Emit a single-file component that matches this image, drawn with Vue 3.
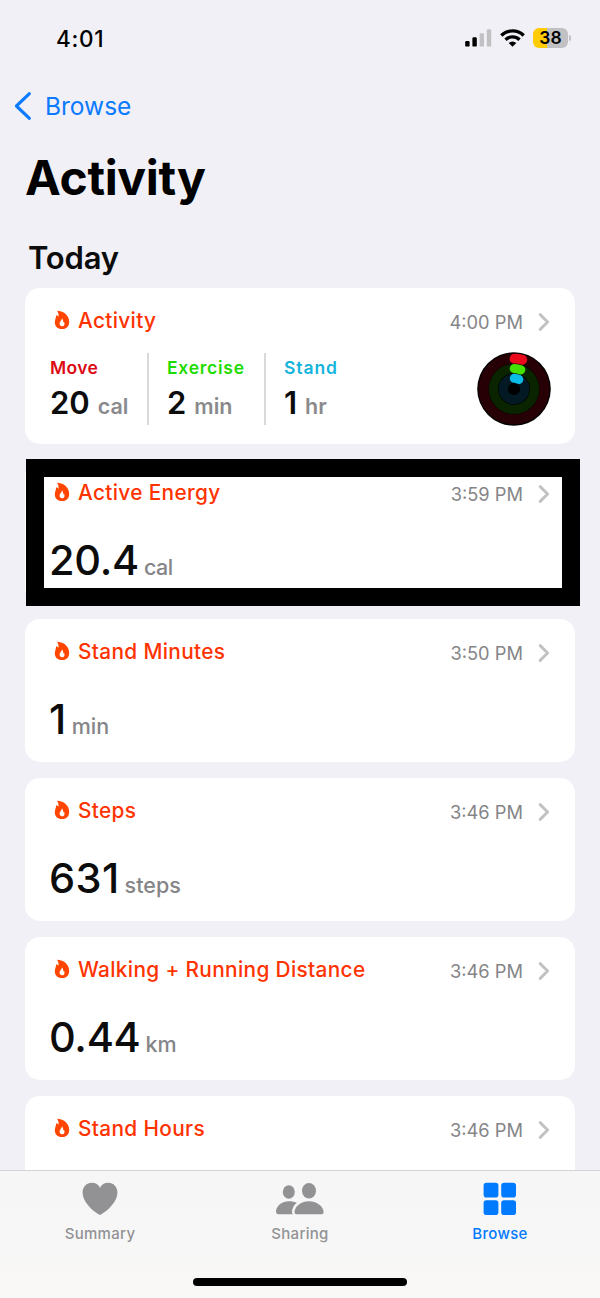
<script setup>
import { ref } from "vue"

const activeTab = ref("browse")

const summary = [
    { key: "move", label: "Move", value: "20", unit: "cal" },
    { key: "exercise", label: "Exercise", value: "2", unit: "min" },
    { key: "stand", label: "Stand", value: "1", unit: "hr" },
]

const cards = [
    { key: "activity", title: "Activity", time: "4:00 PM", rings: true },
    { key: "energy", title: "Active Energy", time: "3:59 PM", value: "20.4", unit: "cal", highlighted: true },
    { key: "minutes", title: "Stand Minutes", time: "3:50 PM", value: "1", unit: "min" },
    { key: "steps", title: "Steps", time: "3:46 PM", value: "631", unit: "steps" },
    { key: "distance", title: "Walking + Running Distance", time: "3:46 PM", value: "0.44", unit: "km" },
    { key: "hours", title: "Stand Hours", time: "3:46 PM", value: "", unit: "" },
]

const tabs = [
    { key: "summary", label: "Summary" },
    { key: "sharing", label: "Sharing" },
    { key: "browse", label: "Browse" },
]
</script>

<template>
    <div class="screen">

        <!-- STATUS BAR -->
        <header class="status-bar">
            <span class="clock">4:01</span>
            <div class="status-icons">
                <svg class="signal" width="27" height="18" viewBox="0 0 27 18">
                    <rect x="0.2" y="12" width="4.4" height="5.6" rx="1.2" fill="#000" />
                    <rect x="7.4" y="8.2" width="4.4" height="9.4" rx="1.2" fill="#000" />
                    <rect x="14.6" y="4.2" width="4.4" height="13.4" rx="1.2" fill="#c1c1c4" />
                    <rect x="21.8" y="0.2" width="4.4" height="17.4" rx="1.2" fill="#c1c1c4" />
                </svg>
                <svg class="wifi" width="25" height="18" viewBox="0 0 25 18">
                    <g fill="none" stroke="#000" stroke-width="3.3">
                        <path d="M1.3 6.5A16 16 0 0 1 23.7 6.5" />
                        <path d="M5.5 10.8A10 10 0 0 1 19.5 10.8" />
                    </g>
                    <path d="M12.5 17.8L8.7 14A5.5 5.5 0 0 1 16.3 14Z" fill="#000" />
                </svg>
                <div class="battery">38</div>
                <span class="battery-cap"></span>
            </div>
        </header>

        <nav class="back">
            <svg width="18" height="30" viewBox="0 0 18 30">
                <path d="M15.4 2.7L2.4 15L15.4 27.3" fill="none" stroke="#0a7aff" stroke-width="3.1" stroke-linecap="round" stroke-linejoin="round" />
            </svg>
            <span>Browse</span>
        </nav>

        <h1>Activity</h1>
        <h2>Today</h2>

        <!-- CARDS -->
        <main class="cards">
            <section v-for="card in cards" :key="card.key" class="card" :class="{ tall: card.rings }">
                <div class="card-head">
                    <svg class="flame" width="16" height="20" viewBox="0 0 16 20">
                        <path fill="#ff4500" fill-rule="evenodd" d="M2.9 .8C8.2 .7 15.2 4.6 15.2 11.9C15.2 16.4 12.2 19.1 8 19.1C3.6 19.1 .8 16.4 .8 12.6C.8 9.6 2.2 7.9 2.2 5.2C3.2 5.4 4 6 4.4 6.9C4.8 4.6 4.4 2.4 2.9 .8ZM7.9 8.2C8.2 10 5.6 11.2 5.6 13.8C5.6 15.4 6.6 16.3 8 16.3C9.5 16.3 10.5 15.4 10.5 13.9C10.5 12.9 10.2 12.1 9.8 11.6C9.7 12.2 9.5 12.5 9.1 12.7C9.4 11.1 9 9.2 7.9 8.2Z" />
                    </svg>
                    <span class="card-title" :class="card.key">{{ card.title }}</span>
                    <span class="card-time">{{ card.time }}</span>
                    <svg class="chevron" width="12" height="20" viewBox="0 0 12 20">
                        <path d="M2.2 2.6L9.6 10L2.2 17.4" fill="none" stroke="#c2c2c4" stroke-width="2.9" stroke-linecap="round" stroke-linejoin="round" />
                    </svg>
                </div>

                <div v-if="card.rings" class="summary">
                    <div v-for="item in summary" :key="item.key" class="stat">
                        <div class="stat-label" :class="item.key">{{ item.label }}</div>
                        <div class="stat-value">
                            <b>{{ item.value }}</b>
                            <span>{{ item.unit }}</span>
                        </div>
                    </div>
                    <svg class="rings" width="74" height="74" viewBox="-37 -37 74 74">
                        <circle r="36.8" fill="#000" />
                        <g fill="none">
                            <circle r="30.5" stroke="#270006" stroke-width="10" />
                            <circle r="20.5" stroke="#0a2400" stroke-width="9.2" />
                            <circle r="10.7" stroke="#031a24" stroke-width="9.2" />
                            <g stroke-linecap="round">
                                <path d="M.5 -30.3A30.3 30.3 0 0 1 8.3 -29.2" stroke="#ea0a1c" stroke-width="9.8" />
                                <path d="M.3 -20.4A20.4 20.4 0 0 1 6.8 -19.2" stroke="#45e000" stroke-width="9.2" />
                                <path d="M.3 -10.7A10.7 10.7 0 0 1 4.8 -9.6" stroke="#08bce6" stroke-width="9" />
                            </g>
                        </g>
                    </svg>
                </div>

                <div v-else-if="card.value" class="reading" :class="card.key">
                    <span class="value">{{ card.value }}</span>
                    <span class="unit">{{ card.unit }}</span>
                </div>

                <div v-if="card.highlighted" class="highlight"></div>
            </section>
        </main>

        <!-- TAB BAR -->
        <footer class="tab-bar">
            <div class="tabs">
                <button v-for="tab in tabs" :key="tab.key" class="tab" :class="{ active: activeTab === tab.key }" @click="activeTab = tab.key">
                    <svg v-if="tab.key === 'summary'" width="36" height="34" viewBox="0 0 36 34">
                        <path fill="currentColor" d="M18 33C16.6 33 .6 22.5 .6 10.6C.6 4.8 4.6 .8 9.8 .8C13.5 .8 16.4 2.7 18 5.7C19.6 2.7 22.5 .8 26.2 .8C31.4 .8 35.4 4.8 35.4 10.6C35.4 22.5 19.4 33 18 33Z" />
                    </svg>
                    <svg v-else-if="tab.key === 'sharing'" width="48" height="34" viewBox="0 0 48 34">
                        <g fill="currentColor">
                            <ellipse cx="12.8" cy="10" rx="6" ry="6.7" />
                            <ellipse cx="33" cy="8.7" rx="7" ry="7.7" />
                            <path d="M20.9 20.8C17.5 23.4 15.9 27 16 30.3Q16 31.5 17 32.2H2.2Q0 32.2 0 29.8C0 24.5 5 19.2 12.8 19.2C16 19.2 18.8 19.9 20.9 20.8Z" />
                            <path d="M21 32.2C19.4 32.2 18.5 31.4 18.5 29.9C18.5 25.4 24 19.2 33 19.2C42 19.2 47.6 25.4 47.6 29.9C47.6 31.4 46.7 32.2 45.1 32.2Z" />
                        </g>
                    </svg>
                    <svg v-else width="34" height="34" viewBox="0 0 34 34">
                        <g fill="currentColor">
                            <rect x=".6" y=".7" width="14.8" height="14.8" rx="2.8" />
                            <rect x="18.2" y=".7" width="14.8" height="14.8" rx="2.8" />
                            <rect x=".6" y="18.2" width="14.8" height="14.8" rx="2.8" />
                            <rect x="18.2" y="18.2" width="14.8" height="14.8" rx="2.8" />
                        </g>
                    </svg>
                    <span>{{ tab.label }}</span>
                </button>
            </div>
            <div class="home-indicator"></div>
        </footer>

    </div>
</template>

<style>
body {
    margin: 0;
    background: #f1f0f6;
}
</style>

<style scoped>
.screen {
    display: flex;
    flex-direction: column;
    width: 600px;
    height: 1298px;
    overflow: hidden;
    background: #f1f0f6;
    color: #0c0c0d;
    font-family: Inter, "Liberation Sans", sans-serif;
}

/* STATUS BAR */
.status-bar {
    flex: none;
    display: flex;
    align-items: center;
    justify-content: space-between;
    height: 76px;
    padding: 0 30px 0 56px;
    color: #000;
}

.clock {
    font-size: 22.5px;
    font-weight: 500;
    letter-spacing: 0.7px;
}

.status-icons {
    display: flex;
    align-items: center;
}

.wifi {
    margin: 0 8px 0 8px;
}

.battery {
    width: 35px;
    height: 20px;
    border-radius: 6px;
    background: linear-gradient(90deg, #ffcc02 14px, #c1c1c4 14px);
    font-size: 17.5px;
    font-weight: 600;
    line-height: 20px;
    text-align: center;
}

.battery-cap {
    width: 2px;
    height: 6px;
    margin-left: 1px;
    margin-right: -1px;
    border-radius: 0 3px 3px 0;
    background: #c1c1c4;
}

/* HEADINGS */
.back {
    flex: none;
    display: flex;
    align-items: center;
    gap: 13px;
    height: 60px;
    padding-left: 14px;
    color: #0a7aff;
    font-size: 24.5px;
    letter-spacing: 0;
}

h1 {
    flex: none;
    margin: 0;
    padding: 12px 0 0 25px;
    color: #000;
    font-size: 48px;
    font-weight: 700;
    line-height: 60px;
    letter-spacing: -0.3px;
}

h2 {
    flex: none;
    margin: 0;
    padding: 30px 0 10px 28px;
    font-size: 31px;
    font-weight: 600;
    line-height: 40px;
    letter-spacing: -0.2px;
}

/* CARDS */
.cards {
    flex: 1;
    display: flex;
    flex-direction: column;
    gap: 16px;
    min-height: 0;
    padding: 0 25px;
    overflow: hidden;
}

.card {
    position: relative;
    flex: none;
    box-sizing: border-box;
    height: 143px;
    padding: 18px 25px 0;
    border-radius: 15px;
    background: #fff;
}

.card.tall {
    height: 156px;
}

.card-head {
    display: flex;
    align-items: center;
    height: 28px;
    padding-left: 4px;
}

.flame {
    margin-right: 8px;
}

.card-title {
    flex: 1;
    color: #ff3300;
    font-size: 20.8px;
    font-weight: 500;
    letter-spacing: 0.35px;
}

.card-time {
    margin-top: 3px;
    color: #858588;
    font-size: 18.3px;
    letter-spacing: 0;
}

.chevron {
    margin: 4px 0 0 15px;
}

.summary {
    display: flex;
    height: 74px;
    margin-top: 18px;
}

.stat {
    box-sizing: border-box;
    width: 117px;
    height: 72px;
    margin-top: 1px;
}

.stat + .stat {
    padding-left: 18px;
    border-left: 2px solid #d9d9dc;
}

.stat:first-child {
    width: 97px;
}

.stat-label {
    font-size: 17.5px;
    font-weight: 600;
    line-height: 29px;
    letter-spacing: 0.6px;
}

.stat-label.move {
    color: #dc0a14;
    letter-spacing: 0.4px;
}

.stat-label.exercise {
    color: #1fdc00;
    letter-spacing: 0.75px;
}

.stat-label.stand {
    color: #14b4dc;
    letter-spacing: 0.9px;
}

.stat-value {
    display: flex;
    align-items: baseline;
    gap: 8px;
    line-height: 42px;
}

.stat-value b {
    font-size: 31px;
    font-weight: 600;
}

.stat-value span {
    color: #8a8a8d;
    font-size: 21.5px;
    font-weight: 600;
}

.rings {
    flex: none;
    margin-left: auto;
    margin-right: -1px;
}

.reading {
    display: flex;
    align-items: baseline;
    gap: 5px;
    margin: 29px 0 0 -1px;
    line-height: 50px;
}

.value {
    font-size: 41.5px;
    font-weight: 500;
    letter-spacing: 0.4px;
}

.unit {
    color: #858588;
    font-size: 21.5px;
    font-weight: 500;
}

.reading.energy .value,
.reading.distance .value {
    letter-spacing: -0.3px;
}

.reading.energy .unit {
    letter-spacing: -0.5px;
}

/* frame drawn over the selected card */
.highlight {
    position: absolute;
    z-index: 2;
    top: -1px;
    left: 1px;
    box-sizing: border-box;
    width: 554px;
    height: 147px;
    border: 18px solid #000;
}

/* TAB BAR */
.tab-bar {
    flex: none;
    display: flex;
    flex-direction: column;
    align-items: center;
    box-sizing: border-box;
    height: 128px;
    border-top: 1px solid #d4d4d6;
    background: linear-gradient(180deg, #f6f6f6 0%, #f7f7f7 55%, #faf8f6 100%);
}

.tabs {
    display: flex;
    width: 600px;
    height: 107px;
}

.tab {
    display: flex;
    flex-direction: column;
    align-items: center;
    width: 200px;
    padding: 11px 0 0;
    border: none;
    background: none;
    color: #929294;
    font-family: inherit;
    font-size: 15px;
    font-weight: 500;
    letter-spacing: 0.3px;
    cursor: pointer;
}

.tab span {
    margin-top: 8px;
    line-height: 20px;
}

.tab.active {
    color: #007aff;
}

.home-indicator {
    width: 214px;
    height: 8px;
    border-radius: 4px;
    background: #000;
}
</style>
